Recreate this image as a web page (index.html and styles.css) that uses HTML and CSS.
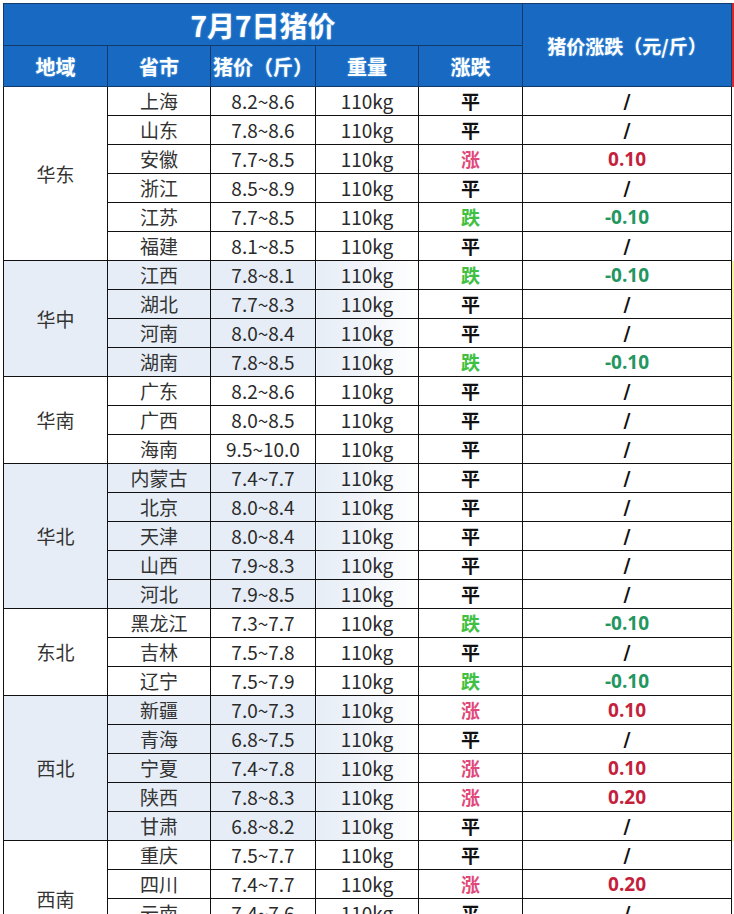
FILE: index.html
```html
<!DOCTYPE html>
<html lang="zh">
<head>
<meta charset="utf-8">
<link rel="stylesheet" href="styles.css">
</head>
<body>
<div class="page">
<table class="price">
<colgroup>
<col class="c1"><col class="c2"><col class="c3"><col class="c4"><col class="c5"><col class="c6">
</colgroup>
<thead>
<tr class="h-title"><th colspan="5" class="title">7月7日猪价</th><th rowspan="2" class="hcol last">猪价涨跌（元/斤）</th></tr>
<tr class="h-cols"><th class="hcol">地域</th><th class="hcol">省市</th><th class="hcol">猪价（斤）</th><th class="hcol">重量</th><th class="hcol">涨跌</th></tr>
</thead>
<tbody>
<tr><td rowspan="6" class="region">华东</td><td class="prov">上海</td><td class="num">8.2~8.6</td><td class="kg">110kg</td><td class="flat">平</td><td class="none">/</td></tr>
<tr><td class="prov">山东</td><td class="num">7.8~8.6</td><td class="kg">110kg</td><td class="flat">平</td><td class="none">/</td></tr>
<tr><td class="prov">安徽</td><td class="num">7.7~8.5</td><td class="kg">110kg</td><td class="up">涨</td><td class="upv">0.10</td></tr>
<tr><td class="prov">浙江</td><td class="num">8.5~8.9</td><td class="kg">110kg</td><td class="flat">平</td><td class="none">/</td></tr>
<tr><td class="prov">江苏</td><td class="num">7.7~8.5</td><td class="kg">110kg</td><td class="down">跌</td><td class="downv">-0.10</td></tr>
<tr><td class="prov">福建</td><td class="num">8.1~8.5</td><td class="kg">110kg</td><td class="flat">平</td><td class="none">/</td></tr>

<tr class="shade"><td rowspan="4" class="region">华中</td><td class="prov">江西</td><td class="num">7.8~8.1</td><td class="kg">110kg</td><td class="down">跌</td><td class="downv">-0.10</td></tr>
<tr class="shade"><td class="prov">湖北</td><td class="num">7.7~8.3</td><td class="kg">110kg</td><td class="flat">平</td><td class="none">/</td></tr>
<tr class="shade"><td class="prov">河南</td><td class="num">8.0~8.4</td><td class="kg">110kg</td><td class="flat">平</td><td class="none">/</td></tr>
<tr class="shade"><td class="prov">湖南</td><td class="num">7.8~8.5</td><td class="kg">110kg</td><td class="down">跌</td><td class="downv">-0.10</td></tr>

<tr><td rowspan="3" class="region">华南</td><td class="prov">广东</td><td class="num">8.2~8.6</td><td class="kg">110kg</td><td class="flat">平</td><td class="none">/</td></tr>
<tr><td class="prov">广西</td><td class="num">8.0~8.5</td><td class="kg">110kg</td><td class="flat">平</td><td class="none">/</td></tr>
<tr><td class="prov">海南</td><td class="num">9.5~10.0</td><td class="kg">110kg</td><td class="flat">平</td><td class="none">/</td></tr>

<tr class="shade"><td rowspan="5" class="region">华北</td><td class="prov">内蒙古</td><td class="num">7.4~7.7</td><td class="kg">110kg</td><td class="flat">平</td><td class="none">/</td></tr>
<tr class="shade"><td class="prov">北京</td><td class="num">8.0~8.4</td><td class="kg">110kg</td><td class="flat">平</td><td class="none">/</td></tr>
<tr class="shade"><td class="prov">天津</td><td class="num">8.0~8.4</td><td class="kg">110kg</td><td class="flat">平</td><td class="none">/</td></tr>
<tr class="shade"><td class="prov">山西</td><td class="num">7.9~8.3</td><td class="kg">110kg</td><td class="flat">平</td><td class="none">/</td></tr>
<tr class="shade"><td class="prov">河北</td><td class="num">7.9~8.5</td><td class="kg">110kg</td><td class="flat">平</td><td class="none">/</td></tr>

<tr><td rowspan="3" class="region">东北</td><td class="prov">黑龙江</td><td class="num">7.3~7.7</td><td class="kg">110kg</td><td class="down">跌</td><td class="downv">-0.10</td></tr>
<tr><td class="prov">吉林</td><td class="num">7.5~7.8</td><td class="kg">110kg</td><td class="flat">平</td><td class="none">/</td></tr>
<tr><td class="prov">辽宁</td><td class="num">7.5~7.9</td><td class="kg">110kg</td><td class="down">跌</td><td class="downv">-0.10</td></tr>

<tr class="shade"><td rowspan="5" class="region">西北</td><td class="prov">新疆</td><td class="num">7.0~7.3</td><td class="kg">110kg</td><td class="up">涨</td><td class="upv">0.10</td></tr>
<tr class="shade"><td class="prov">青海</td><td class="num">6.8~7.5</td><td class="kg">110kg</td><td class="flat">平</td><td class="none">/</td></tr>
<tr class="shade"><td class="prov">宁夏</td><td class="num">7.4~7.8</td><td class="kg">110kg</td><td class="up">涨</td><td class="upv">0.10</td></tr>
<tr class="shade"><td class="prov">陕西</td><td class="num">7.8~8.3</td><td class="kg">110kg</td><td class="up">涨</td><td class="upv">0.20</td></tr>
<tr class="shade"><td class="prov">甘肃</td><td class="num">6.8~8.2</td><td class="kg">110kg</td><td class="flat">平</td><td class="none">/</td></tr>

<tr><td rowspan="4" class="region">西南</td><td class="prov">重庆</td><td class="num">7.5~7.7</td><td class="kg">110kg</td><td class="flat">平</td><td class="none">/</td></tr>
<tr><td class="prov">四川</td><td class="num">7.4~7.7</td><td class="kg">110kg</td><td class="up">涨</td><td class="upv">0.20</td></tr>
<tr><td class="prov">云南</td><td class="num">7.4~7.6</td><td class="kg">110kg</td><td class="flat">平</td><td class="none">/</td></tr>
<tr><td class="prov">贵州</td><td class="num">7.6~7.9</td><td class="kg">110kg</td><td class="flat">平</td><td class="none">/</td></tr>
</tbody>
</table>
<div class="strip">
<div class="strip-red"></div>
<div class="strip-white"></div>
<div class="strip-yellow"></div>
</div>
</div>
</body>
</html>
```
FILE: styles.css
```css
html, body {
  margin: 0;
  padding: 0;
  background: #ffffff;
}
body {
  font-family: "Noto Sans CJK SC", "Noto Sans", sans-serif;
  color: #2a2a2a;
  overflow: hidden;
}
.page {
  display: flex;
  align-items: flex-start;
  padding: 3px 0 0 3px;
  width: 734px;
  height: 914px;
  box-sizing: border-box;
  overflow: hidden;
}
.price {
  border-collapse: collapse;
  table-layout: fixed;
  width: 728px;
  flex: none;
}
.c1 { width: 104px; }
.c2 { width: 103px; }
.c3 { width: 105px; }
.c4 { width: 103px; }
.c5 { width: 104px; }
.c6 { width: 209px; }

.price th, .price td {
  padding: 0;
  text-align: center;
  vertical-align: middle;
  white-space: nowrap;
  overflow: hidden;
}
.price th {
  background: #1769c2;
  color: #ffffff;
  font-weight: 700;
  border: 1px solid #123a6b;
  text-shadow: 0 0 2px rgba(160, 220, 255, 0.7);
}
.h-title th { height: 41px; }
.h-cols th { height: 40px; }
.title {
  font-size: 28px;
  background: #1a6cc4;
}
.hcol {
  font-size: 20px;
}
.last {
  font-size: 19px;
}

.price td {
  height: 28px;
  border: 1px solid #111111;
  font-size: 19px;
  line-height: 28px;
  background: #ffffff;
}
.region {
  font-size: 19px;
  color: #333333;
}
.prov { color: #333333; }
.num { color: #2a2a2a; font-size: 19.5px; }
.kg { color: #2a2a2a; }
.flat {
  font-weight: 700;
  color: #111111;
  font-size: 20px;
}
.up {
  font-weight: 700;
  color: #e0497a;
  font-size: 19px;
}
.down {
  font-weight: 700;
  color: #40c040;
  font-size: 19px;
}
.none {
  font-family: "DejaVu Sans", "Liberation Sans", sans-serif;
  font-weight: 700;
  font-size: 26px;
  color: #111111;
}
.upv {
  font-family: "Open Sans", "Liberation Sans", sans-serif;
  font-weight: 700;
  color: #c41f3c;
  font-size: 22px;
}
.downv {
  font-family: "Open Sans", "Liberation Sans", sans-serif;
  font-weight: 700;
  color: #24965f;
  font-size: 22px;
}

.shade .region,
.shade .prov,
.shade .num {
  background: #e6edf6;
}
.shade .kg {
  background: linear-gradient(to right, #e6edf6 0%, #f3f6fa 55%, #ffffff 100%);
}

.strip {
  flex: none;
  width: 3px;
  display: flex;
  flex-direction: column;
}
.strip-red { height: 84px; background: #d8262d; }
.strip-white { height: 174px; background: #ffffff; }
.strip-yellow { height: 580px; background: #f4f59a; }
```
